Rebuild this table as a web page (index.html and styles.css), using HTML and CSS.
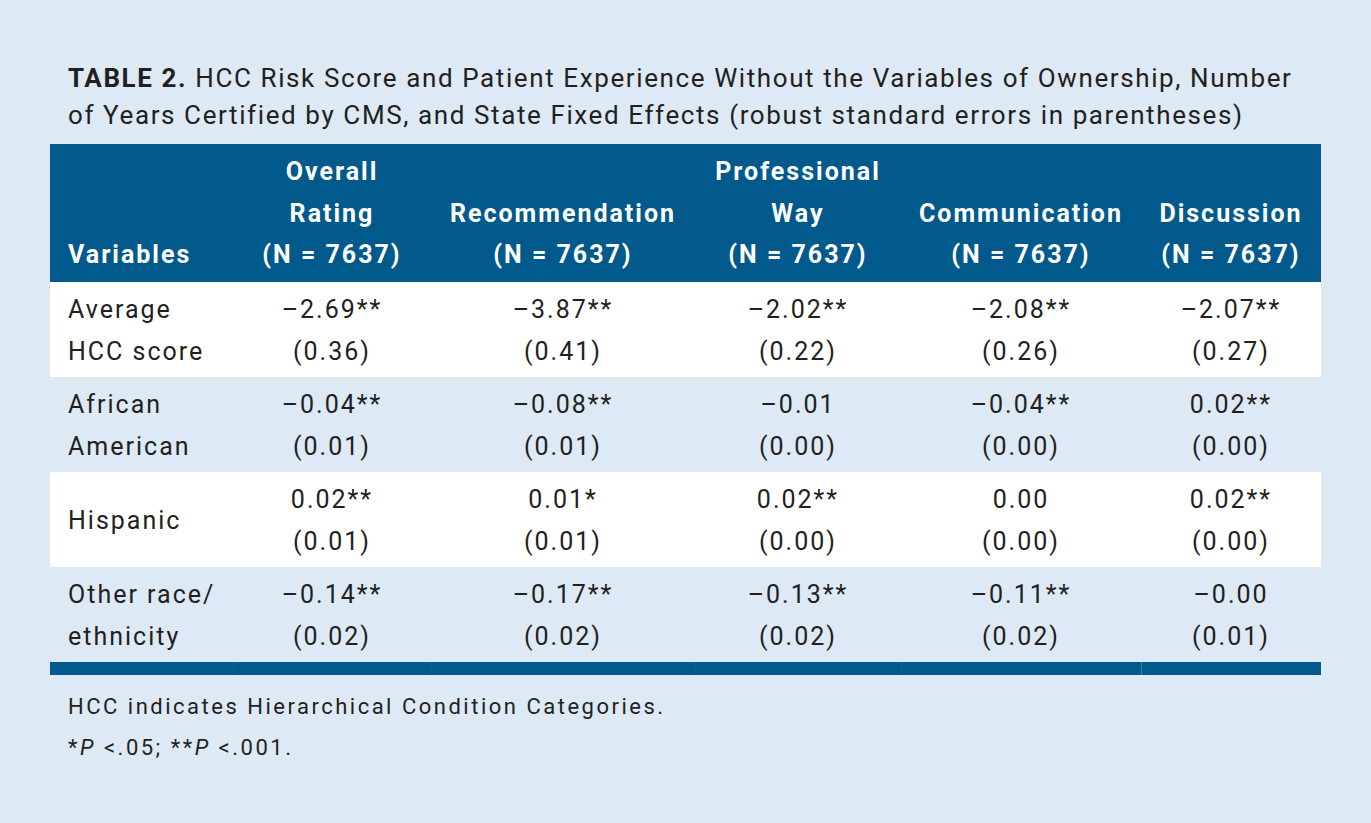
FILE: index.html
```html
<!DOCTYPE html>
<html lang="en">
<head>
<meta charset="utf-8">
<title>Table 2</title>
<link rel="stylesheet" href="styles.css">
</head>
<body>
<div class="page">
  <h1 class="title"><span class="label">TABLE 2.</span> HCC Risk Score and Patient Experience Without the Variables of Ownership, Number of Years Certified by CMS, and State Fixed Effects (robust standard errors in parentheses)</h1>
  <table class="data">
    <colgroup>
      <col class="c1"><col class="c2"><col class="c3"><col class="c4"><col class="c5"><col class="c6">
    </colgroup>
    <thead>
      <tr>
        <th class="var">Variables</th>
        <th>Overall<br>Rating<br>(N = 7637)</th>
        <th>Recommendation<br>(N = 7637)</th>
        <th>Professional<br>Way<br>(N = 7637)</th>
        <th>Communication<br>(N = 7637)</th>
        <th>Discussion<br>(N = 7637)</th>
      </tr>
    </thead>
    <tbody>
      <tr class="odd">
        <td class="var">Average<br>HCC score</td>
        <td>–2.69**<br>(0.36)</td>
        <td>–3.87**<br>(0.41)</td>
        <td>–2.02**<br>(0.22)</td>
        <td>–2.08**<br>(0.26)</td>
        <td>–2.07**<br>(0.27)</td>
      </tr>
      <tr class="even">
        <td class="var">African<br>American</td>
        <td>–0.04**<br>(0.01)</td>
        <td>–0.08**<br>(0.01)</td>
        <td>–0.01<br>(0.00)</td>
        <td>–0.04**<br>(0.00)</td>
        <td>0.02**<br>(0.00)</td>
      </tr>
      <tr class="odd">
        <td class="var">Hispanic</td>
        <td>0.02**<br>(0.01)</td>
        <td>0.01*<br>(0.01)</td>
        <td>0.02**<br>(0.00)</td>
        <td>0.00<br>(0.00)</td>
        <td>0.02**<br>(0.00)</td>
      </tr>
      <tr class="even">
        <td class="var">Other race/<br>ethnicity</td>
        <td>–0.14**<br>(0.02)</td>
        <td>–0.17**<br>(0.02)</td>
        <td>–0.13**<br>(0.02)</td>
        <td>–0.11**<br>(0.02)</td>
        <td>–0.00<br>(0.01)</td>
      </tr>
    </tbody>
    <tfoot>
      <tr class="bar">
        <td></td><td class="faint"></td><td class="faint"></td><td class="faint"></td><td class="faint"></td><td></td>
      </tr>
    </tfoot>
  </table>
  <div class="notes">
    <p>HCC indicates Hierarchical Condition Categories.</p>
    <p>*<i>P</i> &lt;.05; **<i>P</i> &lt;.001.</p>
  </div>
</div>
</body>
</html>
```
FILE: styles.css
```css
html, body {
  margin: 0;
  padding: 0;
  background: #dde9f5;
}
body {
  font-family: Roboto, "Liberation Sans", sans-serif;
  color: #231f20;
}
.page {
  padding: 60px 50px 0 50px;
}
.title {
  margin: 0 0 10px 0;
  padding: 0 18px;
  font-size: 26px;
  font-weight: 400;
  line-height: 37px;
  letter-spacing: 1.6px;
}
.title .label {
  font-weight: 700;
}
.data {
  width: 1271px;
  border-collapse: collapse;
  table-layout: fixed;
  font-size: 25px;
  letter-spacing: 2px;
}
.c1 { width: 183px; }
.c2 { width: 198px; }
.c3 { width: 264px; }
.c4 { width: 206px; }
.c5 { width: 240px; }
.c6 { width: 180px; }
thead th {
  background: #02598b;
  color: #ffffff;
  font-weight: 700;
  line-height: 41.5px;
  padding: 7px 0 6px 0;
  text-align: center;
  vertical-align: bottom;
  letter-spacing: 2px;
}
th.var, td.var {
  text-align: left;
  padding-left: 18px;
}
tbody td {
  line-height: 42px;
  padding: 7px 0 4px 0;
  text-align: center;
  vertical-align: middle;
}
tr.odd td { background: #ffffff; }
tr.even td { background: #dde9f5; }
tr.bar td {
  background: #02598b;
  height: 13px;
  padding: 0;
  border-left: 1px solid #3f7ba6;
}
tr.bar td.faint { border-left-color: #0f6294; }
tr.bar td:first-child { border-left: none; }
.notes {
  padding: 11px 18px 0 18px;
  font-size: 22px;
  letter-spacing: 2.5px;
  line-height: 41px;
}
.notes p { margin: 0; }
```
